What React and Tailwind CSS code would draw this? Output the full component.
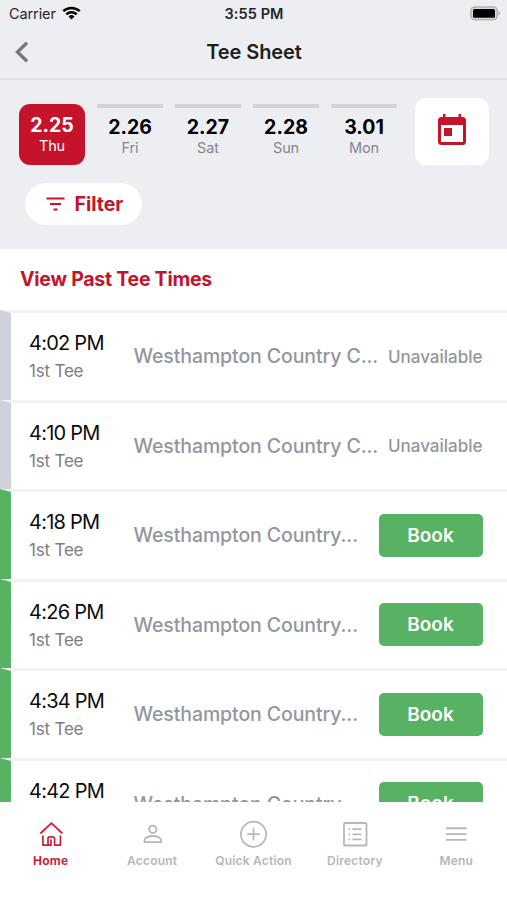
import React from 'react';
import clsx from 'clsx';

const days = [
    { date: '2.25', day: 'Thu', active: true },
    { date: '2.26', day: 'Fri' },
    { date: '2.27', day: 'Sat' },
    { date: '2.28', day: 'Sun' },
    { date: '3.01', day: 'Mon' },
];

const teeTimes = [
    { time: '4:02 PM', club: 'Westhampton Country C...', open: false },
    { time: '4:10 PM', club: 'Westhampton Country C...', open: false },
    { time: '4:18 PM', club: 'Westhampton Country...', open: true },
    { time: '4:26 PM', club: 'Westhampton Country...', open: true },
    { time: '4:34 PM', club: 'Westhampton Country...', open: true },
    { time: '4:42 PM', club: 'Westhampton Country...', open: true },
];

const HomeIcon = () => (
    <svg width="26" height="28" viewBox="0 0 26 28" fill="none" stroke="currentColor" strokeWidth="1.8" strokeLinecap="round" strokeLinejoin="round">
        <path d="M2.900 13 13.400 3.200 23.900 13" />
        <path d="M4.900 16v9.200h8.100v-5.200M10 25v-6.400a1.800 1.800 0 0 1 1.800-1.800h3a1.800 1.800 0 0 1 1.800 1.800v6.600h5.800V16" strokeWidth="1.700" />
    </svg>
);

const AccountIcon = () => (
    <svg width="26" height="28" viewBox="0 0 26 28" fill="none" stroke="currentColor" strokeWidth="1.8">
        <circle cx="13.800" cy="9.300" r="3.700" />
        <path d="M5.500 22.200v-1.900c0-2.700 4.300-4.300 8.300-4.300s8.300 1.600 8.300 4.300v1.900z" strokeLinejoin="round" />
    </svg>
);

const PlusIcon = () => (
    <svg width="28" height="28" viewBox="0 0 28 28" fill="none" stroke="currentColor" strokeWidth="1.7" strokeLinecap="round">
        <circle cx="14.500" cy="14.200" r="12.600" />
        <path d="M14.500 8.700v11M9 14.200h11" />
    </svg>
);

const DirectoryIcon = () => (
    <svg width="26" height="28" viewBox="0 0 26 28" fill="none" stroke="currentColor" strokeWidth="1.800">
        <rect x="2" y="3" width="22.500" height="22.500" rx="1" />
        <path d="M10.500 9.200h9M10.500 14.300h9M10.500 19.400h9" />
        <path d="M6.500 9.200h1.700M6.500 14.300h1.700M6.500 19.400h1.700" />
    </svg>
);

const MenuIcon = () => (
    <svg width="26" height="28" viewBox="0 0 26 28" fill="none" stroke="currentColor" strokeWidth="1.900">
        <path d="M2.900 8.300h20.600M2.900 14.100h20.600M2.900 19.900h20.600" />
    </svg>
);

const tabs = [
    { label: 'Home', Icon: HomeIcon, active: true },
    { label: 'Account', Icon: AccountIcon },
    { label: 'Quick Action', Icon: PlusIcon },
    { label: 'Directory', Icon: DirectoryIcon },
    { label: 'Menu', Icon: MenuIcon },
];

function StatusBar() {
    return (
        <div className="h-7 grid grid-cols-3 items-center pl-[9px] pr-[8px] text-[#242528]">
            <div className="flex items-center gap-1.5">
                <span className="text-[14.500px] tracking-[-0.1px]">Carrier</span>
                <svg className="-mt-[2px]" width="19" height="14" viewBox="0 0 19 14" fill="none" stroke="#050505" strokeWidth="2.500">
                    <path d="M1.300 5.200a11.800 11.800 0 0 1 16.400 0" />
                    <path d="M4.300 8.400a7.500 7.500 0 0 1 10.400 0" />
                    <path d="m9.500 13.500-3-3.100a4.300 4.300 0 0 1 6 0z" fill="#050505" stroke="none" />
                </svg>
            </div>
            <span className="text-center text-[14.500px] font-semibold tracking-[0.1px] whitespace-nowrap">3:55 PM</span>
            <div className="flex justify-end -mt-[2px] -mr-[2px]">
                <svg width="31" height="15" viewBox="0 0 31 15">
                    <rect x="1" y="0.900" width="26.200" height="12.900" rx="4" fill="#d8d8da" stroke="#b3b3b6" strokeWidth="1.500" />
                    <rect x="3" y="3" width="22" height="8.800" rx="1.500" fill="#000" />
                    <path d="M28.500 5v4.500c2-.8 2-3.700 0-4.500" fill="#a9a9ac" />
                </svg>
            </div>
        </div>
    );
}

function DayTab({ date, day, active }) {
    return (
        <button
            className={clsx(
                'w-[66px] h-[61px] flex flex-col items-center',
                active ? 'bg-[#c4132a] text-white rounded-[11px] pt-[9px]' : 'border-t-4 border-[#d3d4d8] text-black pt-[7px]'
            )}
        >
            <span className="text-[19.500px] leading-[25px] font-bold">{date}</span>
            <span className={clsx('text-[14.500px] leading-[17px] tracking-[-0.1px]', active ? 'text-white -mt-px' : 'text-[#85868a] -mt-px')}>{day}</span>
        </button>
    );
}

function TeeTimeRow({ time, club, open }) {
    return (
        <div
            className={clsx(
                'h-[89.500px] shrink-0 flex items-center border-t-[3px] border-t-[#f2f2f4] border-l-[11px] pl-[18px] pr-[24.500px]',
                open ? 'border-l-[#57b263]' : 'border-l-[#cfd2db]'
            )}
        >
            <div className="w-[104.500px] shrink-0 flex flex-col pt-[2px]">
                <span className="text-[20px] leading-[28px] tracking-[-0.75px] text-[#0b0b0c]">{time}</span>
                <span className="text-[17px] leading-[28px] tracking-[-0.2px] text-[#7c7d80]">1st Tee</span>
            </div>
            <span className="pt-[1px] text-[19.500px] tracking-[-0.100px] font-medium text-[#94969e] whitespace-nowrap">{club}</span>
            {open ? (
                <button className="ml-auto w-[104px] h-[43px] shrink-0 rounded-[5px] bg-[#57b263] pt-[1px] text-white text-[19px] font-semibold">Book</button>
            ) : (
                <span className="ml-auto pt-[2px] text-[17px] font-medium text-[#94969e]">Unavailable</span>
            )}
        </div>
    );
}

export default function App() {
    return (
        <div className="w-[507px] h-[900px] flex flex-col overflow-hidden bg-white font-['Inter',sans-serif]">
            <header className="h-[80px] shrink-0 bg-[#edeef2] border-b-2 border-[#e0e1e4]">
                <StatusBar />
                <div className="h-12 grid grid-cols-[60px_1fr_60px] items-center">
                    <svg className="ml-[14px]" width="16" height="22" viewBox="0 0 16 22" fill="none" stroke="#77787b" strokeWidth="3.300">
                        <path d="M13 1.800 3.500 11l9.500 9.200" />
                    </svg>
                    <h1 className="pl-[1px] text-center text-[20px] tracking-[-0.100px] font-semibold text-[#1d1e20]">Tee Sheet</h1>
                </div>
            </header>

            <section className="h-[169px] shrink-0 bg-[#edeef2] pt-[18px] pl-[19px] pr-[18px]">
                <div className="flex justify-between">
                    <div className="flex gap-3 pt-[6px]">
                        {days.map((d) => (
                            <DayTab key={d.date} {...d} />
                        ))}
                    </div>
                    <button className="w-[74px] h-[67px] rounded-[11px] bg-white flex items-center justify-center pb-[4px]">
                        <svg width="28" height="31" viewBox="0 0 28 31" fill="#c4132a">
                            <path fillRule="evenodd" d="M5 0h2.500v3h13V0H23v3h1.500A3.500 3.500 0 0 1 28 6.500v21a3.500 3.500 0 0 1-3.500 3.500h-21A3.500 3.500 0 0 1 0 27.500v-21A3.500 3.500 0 0 1 3.500 3H5zM3 11v17h22V11z" />
                            <path d="M6 14h8v8H6z" />
                        </svg>
                    </button>
                </div>
                <button className="mt-[18px] ml-[6px] w-[117px] h-[42px] rounded-full bg-white flex items-center pl-[21px] gap-[9.500px] text-[#c4132a]">
                    <svg width="19" height="14" viewBox="0 0 19 14" fill="none" stroke="currentColor" strokeWidth="2">
                        <path d="M0.500 1.500h18M4 7h11M7.500 12.500h4" />
                    </svg>
                    <span className="pt-[1px] text-[19.500px] font-bold">Filter</span>
                </button>
            </section>

            <div className="h-[61px] shrink-0 flex items-center pl-5">
                <a className="text-[19.500px] tracking-[-0.250px] font-bold text-[#c4132a]">View Past Tee Times</a>
            </div>

            <div className="flex-1 min-h-0 overflow-hidden flex flex-col">
                {teeTimes.map((t) => (
                    <TeeTimeRow key={t.time} {...t} />
                ))}
            </div>

            <nav className="h-[98px] shrink-0 bg-white grid grid-cols-5 pt-[18px]">
                {tabs.map(({ label, Icon, active }) => (
                    <div key={label} className={clsx('flex flex-col items-center', active ? 'text-[#cf1f38]' : 'text-[#b5b7bc]')}>
                        <Icon />
                        <span className={clsx('mt-[5px] text-[12px] leading-4 tracking-[0.2px] whitespace-nowrap', active ? 'font-bold' : 'font-semibold')}>{label}</span>
                    </div>
                ))}
            </nav>
        </div>
    );
}
